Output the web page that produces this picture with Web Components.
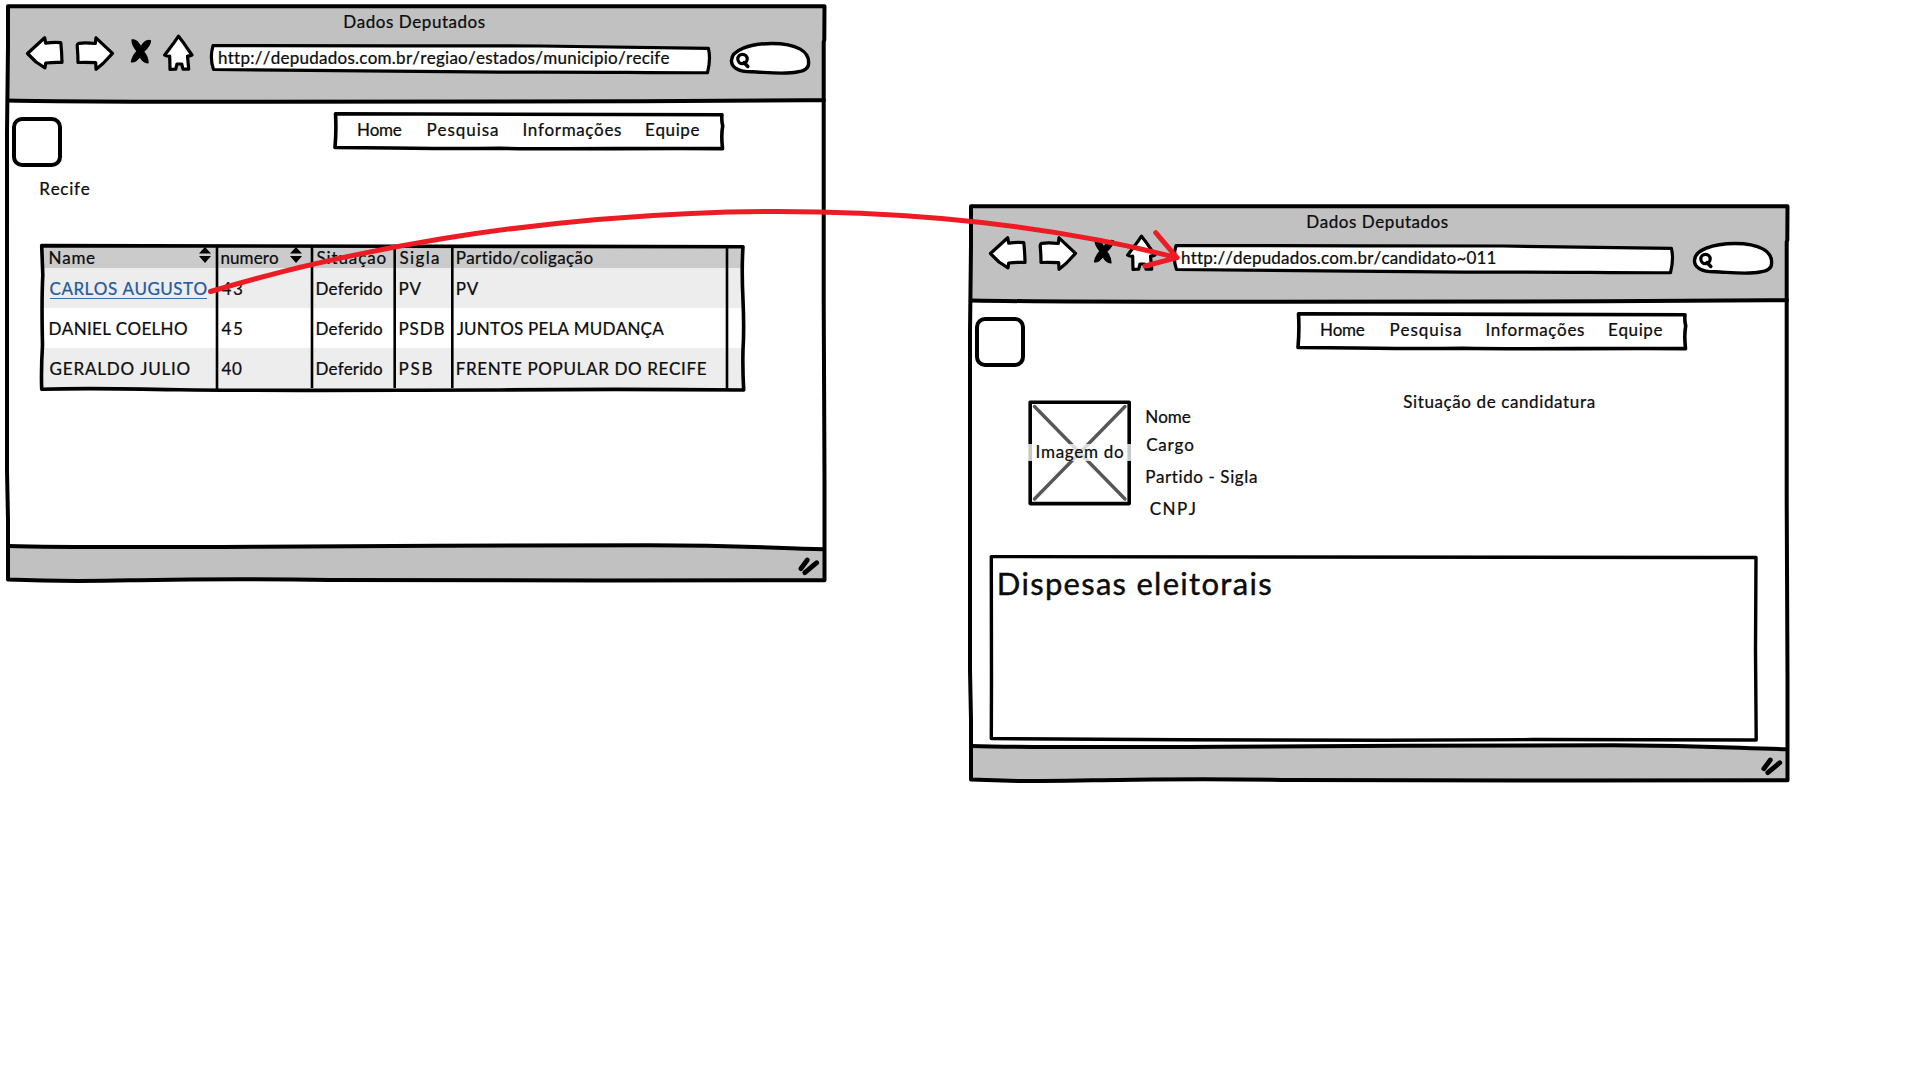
<!DOCTYPE html>
<html lang="pt-BR">
<head>
<meta charset="utf-8">
<title>Dados Deputados</title>
<style>
  html, body { margin: 0; width: 1920px; height: 1080px; overflow: hidden; background: #fff; }
  body { position: relative; font: 17px/20px Lato, "Open Sans", sans-serif; color: #0c0c0c; }
  browser-window { position: absolute; left: 0; top: 0; }
  browser-window.second { left: 963px; top: 200px; }
  link-arrow { position: absolute; left: 0; top: 0; }
</style>
</head>
<body>
  <browser-window>
    <fit-text slot="title" w="140.5">Dados Deputados</fit-text>
    <fit-text slot="url" w="450">http://depudados.com.br/regiao/estados/municipio/recife</fit-text>
    <region-page></region-page>
  </browser-window>

  <browser-window class="second">
    <fit-text slot="title" w="140.5">Dados Deputados</fit-text>
    <fit-text slot="url" w="313">http://depudados.com.br/candidato~011</fit-text>
    <candidate-page></candidate-page>
  </browser-window>

  <link-arrow></link-arrow>

<template id="t-window">
  <style>
    :host { display: grid; width: 832px; height: 590px; }
    .frame, .content { grid-area: 1 / 1; }
    .frame { display: block; }
    .content { display: grid; grid-template-rows: 102px 1fr; z-index: 1; min-width: 0; }
    header { display: flex; flex-direction: column; padding-top: 12px; box-sizing: border-box; }
    .title { height: 22px; padding-left: 344.3px; }
    nav-toolbar { margin-left: 24px; }
  </style>
  <svg class="frame" width="832" height="590" fill="none" stroke="#000" stroke-width="4" stroke-linejoin="round" stroke-linecap="round">
    <path d="M8 6.3H824V101H8Z" fill="#c1c1c1" stroke="none"/>
    <path d="M8 546C60 547.5 150 547.3 260 546.7S560 545 650 545.3S760 547.5 824 549.3V580H8Z" fill="#c1c1c1" stroke="none"/>
    <path d="M8 6.3H824.5L824.3 40L823.7 42V300L824.5 480V580.3C680 580.5 440 580.8 330 580C230 578.5 180 579.5 130 580.3C90 581.5 40 581 8 579.6V520L7 470V132L8 46Z"/>
    <path d="M8 100.5C90 102 180 101.7 260 101.8C400 100.5 520 102 640 101.3C720 100.3 770 100.3 824 100.3"/>
    <path d="M8 546C60 547.5 150 547.3 260 546.7S560 545 650 545.3S760 547.5 824 549.3"/>
    <path d="M807.3 560L800.8 568.7M816.8 562.7L804.8 572.6" stroke-width="4.8"/>
  </svg>
  <div class="content">
    <header>
      <div class="title"><slot name="title"></slot></div>
      <nav-toolbar><slot name="url"></slot></nav-toolbar>
    </header>
    <slot></slot>
  </div>
</template>

<template id="t-toolbar">
  <style>
    :host { display: flex; height: 42px; }
    svg { display: block; flex: none; height: 42px; fill: #fff; stroke: #000; stroke-width: 3.2; stroke-linejoin: round; stroke-linecap: round; }
    .fwd { margin-left: 8px; } .stop { margin-left: 12px; } .home { margin-left: 6px; }
    .url { display: grid; margin: 0 16px 0 13px; }
    .url svg, .url div { grid-area: 1 / 1; }
    .url div { z-index: 1; padding: 14px 0 0 10px; }
  </style>
  <svg width="42" viewBox="24 34 42 42"><path d="M27.5 53.5L44.7 37.8L45.7 43.2Q53 42 60.8 42.6Q61.8 52 62 62.4Q54 62 45.7 63L45 67.8L36 62Z"/></svg>
  <svg class="fwd" width="42" viewBox="74 34 42 42"><path d="M112.5 53.4L96 37.8L95.3 43.5Q86 42.5 79 43.3Q76.8 44 77.3 47Q78 55 78 62.5Q86 62 95.7 62.7L96 69.3L103 63.5Z"/></svg>
  <svg class="stop" width="28" viewBox="128 34 28 42"><path d="M132 40Q136.5 38.8 141 47Q145.5 39 150.5 40.8Q150 46 143.5 51.8Q148 57 148 62.8Q143.5 63 139.8 56.5Q135.5 62.5 131.5 61.8Q132 57 137 51.2Q132 45 132 40Z" style="fill:#000;stroke-width:1.3"/></svg>
  <svg class="home" width="34" viewBox="162 34 34 42"><path d="M178.5 36.2Q184 43 187 48L192 55Q190 56 187.5 56L188.7 69.2H183L181.7 64H177L175.7 69.2L170 69.5L169.7 56.2Q166 56.5 164.6 55.2L170 48Q174 43 178.5 36.2Z"/></svg>
  <div class="url">
    <svg width="504" viewBox="209 34 504 42"><path d="M213 45.6C300 46.5 440 45.2 540 46C600 47.2 660 48 708.4 48.3Q711 59 707.5 72.7C650 73 580 71.5 500 72.2C400 71 300 71 213.5 69.5Q209.5 58 213 45.6Z"/></svg>
    <div><slot></slot></div>
  </div>
  <svg width="82" viewBox="729 34 82 42"><path d="M731.5 61C731 50 750 43.5 772 43.5C796 43.5 810 51 808.5 64C808.5 69 804 71 797 72C785 74.5 768 72.5 752 71.8C738 72 731.5 67 731.5 61Z" style="stroke-width:3.4"/><circle cx="742.5" cy="59" r="4.7"/><path d="M744 62.5L747.8 66.5" style="stroke-width:3.5"/></svg>
</template>

<template id="t-topbar">
  <style>
    :host { display: flex; box-sizing: border-box; margin-top: 10px; height: 54px; }
    .logo { box-sizing: border-box; width: 50px; height: 50px; margin: 5px 0 0 12px; border: 4px solid #000; border-radius: 10px; background: #fff; flex: none; }
    .menu { display: grid; margin-left: 271px; height: 40px; }
    svg, nav { grid-area: 1 / 1; }
    svg { display: block; fill: #fff; stroke: #000; stroke-width: 3.6; stroke-linejoin: round; }
    nav { z-index: 1; display: flex; padding: 8px 0 0 25px; }
    .i2 { margin-left: 25.8px; } .i3 { margin-left: 25.5px; } .i4 { margin-left: 25px; }
  </style>
  <div class="logo"></div>
  <div class="menu">
    <svg width="392" height="40" viewBox="333 112 392 40"><path d="M335.5 113.8C440 115 560 113.8 722 114.8Q721.3 120 722.7 126Q721 135 722.5 148.6C640 148 560 149.5 500 148.3C440 149 380 147.5 335 147.5Q336.5 130 335.5 113.8Z"/></svg>
    <nav><fit-text w="43.7">Home</fit-text><fit-text class="i2" w="70.5">Pesquisa</fit-text><fit-text class="i3" w="97.5">Informações</fit-text><fit-text class="i4" w="53.5">Equipe</fit-text></nav>
  </div>
</template>

<template id="t-region">
  <style>
    :host { display: flex; flex-direction: column; }
    .city { margin: 13px 0 0 40.3px; height: 20px; }
    candidate-table { margin: 43px 0 0 38px; }
  </style>
  <page-topbar></page-topbar>
  <div class="city"><fit-text w="49.4">Recife</fit-text></div>
  <candidate-table></candidate-table>
</template>

<template id="t-table">
  <style>
    :host { display: grid; width: 710px; height: 152px; }
    .rows, .lines { grid-area: 1 / 1; }
    .lines { z-index: 1; display: block; fill: none; stroke: #000; stroke-width: 3; stroke-linejoin: round; }
    .rows { margin: 4px 5px 5px 4px; display: grid; grid-template-rows: 22px 40px 40px 1fr; }
    .r { display: grid; grid-template-columns: 175px 95px 82.5px 57.7px 275px 1fr; background: #ededed; padding-top: 11px; }
    .r.h { background: #cbcbcb; padding-top: 2px; }
    .r.w { background: #fff; }
    .r > div { display: flex; padding-left: 4.5px; height: 20px; }
    .r > div:first-child { padding-left: 7.6px; }
    .r > div:nth-child(4) { padding-left: 5px; }
    .sort { width: 12px; height: 16px; display: block; margin-top: -1px; fill: #000; }
    .link { color: #24599f; border-bottom: 1.6px solid #2e74b8; height: 19px; }
  </style>
  <div class="rows">
    <div class="r h">
      <div><fit-text w="45.5">Name</fit-text><svg class="sort" style="margin-left:103.9px" viewBox="0 0 12 16"><path d="M6 0L12 6.6H0ZM0 9H12L6 16Z"/></svg></div>
      <div><fit-text w="56.5">numero</fit-text><svg class="sort" style="margin-left:11.5px" viewBox="0 0 12 16"><path d="M6 0L12 6.6H0ZM0 9H12L6 16Z"/></svg></div>
      <div><fit-text w="69">Situação</fit-text></div>
      <div><fit-text w="39.5">Sigla</fit-text></div>
      <div><fit-text w="136">Partido/coligação</fit-text></div>
    </div>
    <div class="r">
      <div><div class="link"><fit-text w="157">CARLOS AUGUSTO</fit-text></div></div>
      <div><fit-text w="20.5">43</fit-text></div>
      <div><fit-text w="65.5">Deferido</fit-text></div>
      <div><fit-text w="22">PV</fit-text></div>
      <div><fit-text w="22">PV</fit-text></div>
    </div>
    <div class="r w">
      <div><fit-text w="137.3">DANIEL COELHO</fit-text></div>
      <div><fit-text w="20.5">45</fit-text></div>
      <div><fit-text w="65.5">Deferido</fit-text></div>
      <div><fit-text w="45">PSDB</fit-text></div>
      <div><fit-text w="207.5">JUNTOS PELA MUDANÇA</fit-text></div>
    </div>
    <div class="r">
      <div><fit-text w="140">GERALDO JULIO</fit-text></div>
      <div><fit-text w="20.5">40</fit-text></div>
      <div><fit-text w="65.5">Deferido</fit-text></div>
      <div><fit-text w="33">PSB</fit-text></div>
      <div><fit-text w="250">FRENTE POPULAR DO RECIFE</fit-text></div>
    </div>
  </div>
  <svg class="lines" width="710" height="152" viewBox="38 242 710 152">
    <path d="M217 247V389M312 247V388M394.7 247V388M452.3 247V388M727 245V391" stroke-width="2.6"/>
    <path d="M41.7 245.6C200 245 300 247 400 246.3C520 247 620 245.5 743 246.7Q741.5 270 743 300Q744.3 330 743 350Q742.5 370 743.7 390C640 389 560 389.3 500 390C400 390 260 391 180 389.8C120 388.5 80 388 41.7 389.3Q41 370 42.5 345Q41.5 300 42.8 275Z" stroke-width="3.6"/>
  </svg>
</template>

<template id="t-candidate">
  <style>
    :host { display: flex; flex-direction: column; }
    .details { display: flex; height: 162px; margin-top: 25px; padding-left: 64px; box-sizing: border-box; }
    .photo { display: grid; margin-top: 8px; width: 106px; height: 108px; }
    .photo svg, .photo div { grid-area: 1 / 1; }
    svg { display: block; fill: none; stroke: #000; stroke-width: 3.6; stroke-linejoin: round; stroke-linecap: round; }
    .photo div { z-index: 1; align-self: start; margin: 45px 1px 0; height: 17.3px; background: rgba(255,255,255,.78); padding-left: 8.5px; line-height: 17px; }
    .photo fit-text { margin-top: -1px; }
    .facts { display: flex; flex-direction: column; margin: 16px 0 0 13.2px; width: 244px; }
    .facts div { height: 20px; margin-bottom: 8px; }
    .facts div + div { margin-bottom: 12px; }
    .status { padding: 1px 0 0 13px; }
    .expenses { display: grid; margin-left: 26px; width: 770px; height: 190px; }
    .expenses svg, .expenses div { grid-area: 1 / 1; }
    .expenses div { z-index: 1; padding: 12px 0 0 9.7px; line-height: 36px; }
  </style>
  <page-topbar></page-topbar>
  <div class="details">
    <div class="photo">
      <svg width="106" height="108" viewBox="64 199 106 108"><path d="M67.2 202.2H166.2V303.6H67.2Z"/><path d="M71.5 206.5L162 299M162 206.5L71.5 299" stroke="#575757" stroke-width="3.4"/></svg>
      <div><fit-text w="86.5">Imagem do</fit-text></div>
    </div>
    <div class="facts">
      <div><fit-text w="44.5">Nome</fit-text></div>
      <div><fit-text w="47">Cargo</fit-text></div>
      <div><fit-text w="111">Partido - Sigla</fit-text></div>
      <div style="padding-left:3.5px"><fit-text w="45">CNPJ</fit-text></div>
    </div>
    <div class="status"><fit-text w="191.5">Situação de candidatura</fit-text></div>
  </div>
  <div class="expenses">
    <svg width="770" height="190" viewBox="26 353 770 190"><path d="M28.3 356.6C200 357.5 500 357.3 793 357.5L792.5 450L793.2 540C650 539.3 550 539.3 420 540.3C300 540.3 150 539.5 28.3 538.6L28.5 480Z" fill="#fff" stroke-width="3.4"/></svg>
    <div><fit-text w="272.5" size="31">Dispesas eleitorais</fit-text></div>
  </div>
</template>

<template id="t-arrow">
  <style>:host { display: block; z-index: 5; } svg { display: block; fill: none; stroke: #ed1c24; stroke-width: 5; stroke-linecap: round; stroke-linejoin: round; }</style>
  <svg width="1920" height="1080"><path d="M210.5 291.5C500 204.5 880 181.5 1177 257.7M1155.7 232.7L1177 257.7L1145 266"/></svg>
</template>

<script>
  const ruler = document.createElement('canvas').getContext('2d');

  // A label whose ink starts at its left edge and spans exactly "w" pixels.
  class FitText extends HTMLElement {
    connectedCallback() {
      if (this.shadowRoot) return;
      const size = +(this.getAttribute('size') || 17);
      const width = +this.getAttribute('w');
      const text = this.textContent;
      ruler.font = size + 'px Lato';
      ruler.fontKerning = 'none';
      const m = ruler.measureText(text);
      const ink = m.actualBoundingBoxRight + m.actualBoundingBoxLeft;
      const spacing = (width - ink) / (text.length - 1);
      this.attachShadow({ mode: 'open' }).innerHTML = `<style>
        :host { display: block; width: ${width}px; white-space: pre; flex: none; }
        span { display: block; width: max-content; margin-left: ${m.actualBoundingBoxLeft}px; font-size: ${size}px;
               font-kerning: none; font-variant-ligatures: none; letter-spacing: ${spacing}px;
               -webkit-text-stroke: ${size / 70}px currentColor; }
      </style><span><slot></slot></span>`;
    }
  }
  customElements.define('fit-text', FitText);

  const define = (name, id) => customElements.define(name, class extends HTMLElement {
    constructor() {
      super();
      this.attachShadow({ mode: 'open' }).append(document.getElementById(id).content.cloneNode(true));
    }
  });
  define('nav-toolbar', 't-toolbar');
  define('page-topbar', 't-topbar');
  define('candidate-table', 't-table');
  define('region-page', 't-region');
  define('candidate-page', 't-candidate');
  define('browser-window', 't-window');
  define('link-arrow', 't-arrow');
</script>
</body>
</html>
